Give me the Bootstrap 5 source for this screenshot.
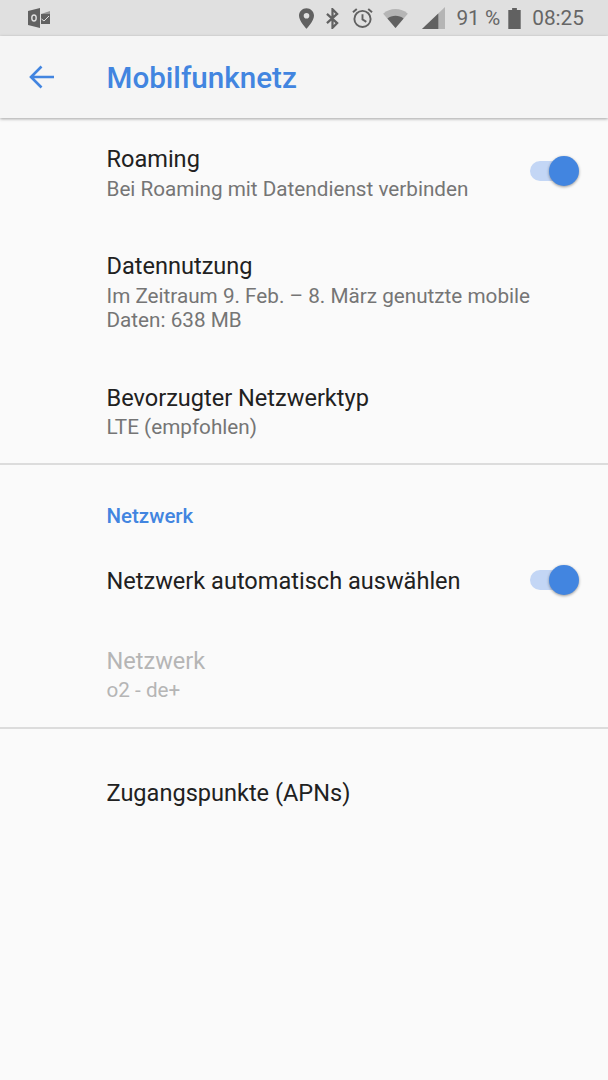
<!DOCTYPE html>
<html lang="de">
<head>
    <meta charset="UTF-8">
    <meta name="viewport" content="width=device-width, initial-scale=1.0">
    <title>Mobilfunknetz</title>
    <link href="https://cdn.jsdelivr.net/npm/bootstrap@5.3.0/dist/css/bootstrap.min.css" rel="stylesheet">
    <style>
        html, body {
            height: 100%;
        }
        body {
            background: #fafafa;
            font-family: Roboto, "Liberation Sans", sans-serif;
            overflow: hidden;
        }
        .status-bar {
            height: 36px;
            background: #e0e0e0;
            padding: 0 24px 0 28px;
            color: #616161;
        }
        .status-text {
            font-size: 20.8px;
            line-height: 36px;
            color: #666;
        }
        .gap-pin { margin-left: 12px; }
        .gap-alarm { margin-left: 13px; }
        .gap-wifi { margin-left: 10px; }
        .gap-signal { margin-left: 14px; }
        .gap-pct { margin-left: 11px; }
        .gap-batt { margin-left: 8px; }
        .gap-time { margin-left: 11px; }
        .app-bar {
            height: 82px;
            background: #f5f5f5;
            box-shadow: 0 1px 3px rgba(0, 0, 0, .35);
            padding-left: 29px;
            position: relative;
        }
        .app-title {
            font-size: 29.6px;
            font-weight: 500;
            color: #4285e0;
            margin: 2px 0 0 52.5px;
            line-height: 80px;
        }
        .setting-row {
            padding-left: 106.5px;
            padding-right: 32px;
        }
        .setting-title {
            font-size: 23.55px;
            line-height: 30px;
            color: #212121;
        }
        .setting-sub {
            font-size: 20.7px;
            line-height: 24px;
            margin-top: 3px;
            color: #757575;
        }
        .row-roaming { height: 107px; padding-top: 26px; }
        .row-usage { height: 131px; padding-top: 26px; }
        .row-type { height: 107px; padding-top: 27px; }
        .row-type .setting-sub, .row-net .setting-sub { margin-top: 2px; }
        .row-head { height: 76px; padding-top: 39px; }
        .row-auto { height: 80px; }
        .row-net { height: 106px; padding-top: 25px; }
        .row-apn { height: 130px; padding-top: 49px; }
        .is-disabled .setting-title, .is-disabled .setting-sub {
            color: #b5b5b5;
        }
        .section-head {
            font-size: 20.5px;
            line-height: 24px;
            font-weight: 500;
            color: #4285e0;
        }
        .divider {
            height: 2px;
            background: #dcdcdc;
        }
        .toggle-track {
            width: 46px;
            height: 20px;
            border-radius: 10px;
            background: #c3d6f5;
            position: relative;
            flex: none;
        }
        .row-roaming .toggle-track { margin-top: 17px; }
        .row-auto .toggle-track { margin-bottom: 2px; }
        .toggle-thumb {
            width: 30px;
            height: 30px;
            border-radius: 50%;
            background: #4285e0;
            position: absolute;
            right: -3px;
            top: -5px;
            box-shadow: 0 1px 3px rgba(0, 0, 0, .4);
        }
    </style>
</head>
<body>
    <div class="status-bar d-flex align-items-center">
        <svg width="22" height="20" viewBox="0 0 22 20" fill="#616161">
            <path d="M0 3 L12 0 V20 L0 17 Z"/>
            <path d="M13 6 H22 V16 H13 Z"/>
            <path d="M13 6 L22 3 V6 Z" opacity=".6"/>
            <ellipse cx="6" cy="10" rx="2.2" ry="3" fill="none" stroke="#e0e0e0" stroke-width="1.4"/>
            <path d="M13.5 11 L16 13 L21 8" fill="none" stroke="#e0e0e0" stroke-width="1"/>
        </svg>
        <div class="ms-auto d-flex align-items-center">
            <svg width="15" height="21" viewBox="0 0 16 22" fill="#616161">
                <path fill-rule="evenodd" d="M8 0 C3.6 0 0 3.5 0 8 C0 13.5 8 22 8 22 C8 22 16 13.5 16 8 C16 3.5 12.4 0 8 0 Z M8 5 A3 3 0 1 1 8 11 A3 3 0 1 1 8 5 Z"/>
            </svg>
            <svg class="gap-pin" width="13" height="21" viewBox="0 0 14 22" fill="none" stroke="#616161" stroke-width="2.4">
                <path d="M1 6 L12 16 L7 21 V1 L12 6 L1 16"/>
            </svg>
            <svg class="gap-alarm" width="21" height="22" viewBox="0 0 22 22" fill="none" stroke="#616161" stroke-width="2">
                <circle cx="11" cy="12" r="8.5"/>
                <path d="M11 7 V12.5 L15 15"/>
                <path d="M1 5 L5 1.5 M21 5 L17 1.5"/>
            </svg>
            <svg class="gap-wifi" width="25" height="19" viewBox="0 0 26 20">
                <path d="M0 5 C7 -1.5 19 -1.5 26 5 L13 20 Z" fill="#b5b5b5"/>
                <path d="M4.5 10 C9 6 17 6 21.5 10 L13 20 Z" fill="#616161"/>
            </svg>
            <svg class="gap-signal" width="23" height="22" viewBox="0 0 24 24" preserveAspectRatio="none">
                <path d="M0 24 L24 0 V24 Z" fill="#b5b5b5"/>
                <path d="M0 24 L17 7 V24 Z" fill="#616161"/>
            </svg>
            <span class="status-text gap-pct">91 %</span>
            <svg class="gap-batt" width="13" height="21" viewBox="0 0 13 22" fill="#616161">
                <path d="M4 0 H9 V2 H13 V22 H0 V2 H4 Z"/>
            </svg>
            <span class="status-text gap-time">08:25</span>
        </div>
    </div>

    <div class="app-bar d-flex align-items-center">
        <svg width="25" height="24" viewBox="0 0 25 24" fill="none" stroke="#4285e0" stroke-width="2.6">
            <path d="M25 12 H2 M12.5 1.5 L2 12 L12.5 22.5"/>
        </svg>
        <h1 class="app-title">Mobilfunknetz</h1>
    </div>

    <div class="setting-row row-roaming d-flex align-items-start justify-content-between">
        <div>
            <div class="setting-title">Roaming</div>
            <div class="setting-sub">Bei Roaming mit Datendienst verbinden</div>
        </div>
        <div class="toggle-track"><div class="toggle-thumb"></div></div>
    </div>
    <div class="setting-row row-usage">
        <div class="setting-title">Datennutzung</div>
        <div class="setting-sub">Im Zeitraum 9. Feb. – 8. März genutzte mobile<br>Daten: 638 MB</div>
    </div>
    <div class="setting-row row-type">
        <div class="setting-title">Bevorzugter Netzwerktyp</div>
        <div class="setting-sub">LTE (empfohlen)</div>
    </div>
    <div class="divider"></div>
    <div class="setting-row row-head">
        <div class="section-head">Netzwerk</div>
    </div>
    <div class="setting-row row-auto d-flex align-items-center justify-content-between">
        <div class="setting-title">Netzwerk automatisch auswählen</div>
        <div class="toggle-track"><div class="toggle-thumb"></div></div>
    </div>
    <div class="setting-row row-net is-disabled">
        <div class="setting-title">Netzwerk</div>
        <div class="setting-sub">o2 - de+</div>
    </div>
    <div class="divider"></div>
    <div class="setting-row row-apn">
        <div class="setting-title">Zugangspunkte (APNs)</div>
    </div>
    <script src="https://cdn.jsdelivr.net/npm/bootstrap@5.3.0/dist/js/bootstrap.bundle.min.js"></script>
</body>
</html>
